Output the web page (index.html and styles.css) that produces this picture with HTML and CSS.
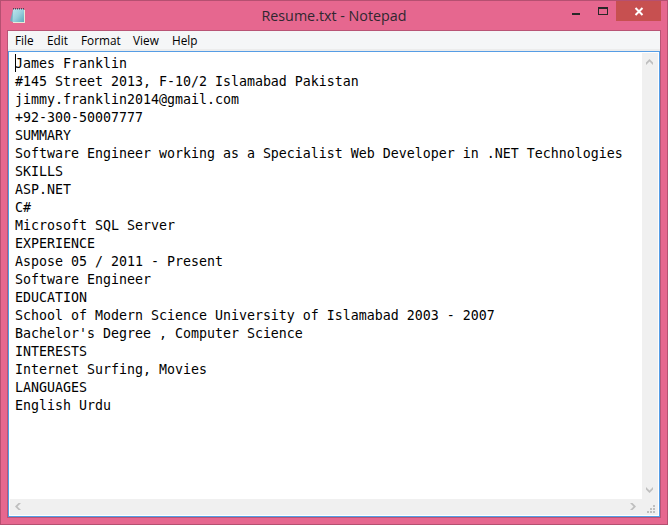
FILE: index.html
```html
<!DOCTYPE html>
<html lang="en">
<head>
<meta charset="utf-8">
<title>Resume.txt - Notepad</title>
<link rel="stylesheet" href="styles.css">
</head>
<body>
<div class="window">
  <header class="titlebar">
    <svg class="app-icon" viewBox="0 0 16 16" width="16" height="16">
      <defs><linearGradient id="paper" x1="0" y1="0" x2="1" y2="1"><stop offset="0" stop-color="#bfe6ee"/><stop offset=".5" stop-color="#9ad0dd"/><stop offset="1" stop-color="#5fa9bb"/></linearGradient></defs>
      <path d="M3 2L0 13L3 14Z" fill="#76a9bc"/>
      <path d="M4 2H15V15H3V14Z" fill="#e9ead8"/>
      <path d="M3 1H14V14H2.500Z" fill="url(#paper)"/>
      <path d="M3 .8H15" stroke="#454b59" stroke-width="1.500" stroke-dasharray="1 1"/>
    </svg>
    <h1 class="title">Resume.txt - Notepad</h1>
    <div class="controls">
      <svg class="control" viewBox="0 0 27 20" width="27" height="20"><path d="M10 12H18V14H10Z" fill="#282828"/></svg>
      <svg class="control" viewBox="0 0 27 20" width="27" height="20"><path fill-rule="evenodd" d="M9 6H19V14H9ZM10 8V13H18V8Z" fill="#282828"/></svg>
      <svg class="control close" viewBox="0 0 45 20" width="45" height="20"><path d="M19.500 7L26.500 14M26.500 7L19.500 14" stroke="#fff" stroke-width="2"/></svg>
    </div>
  </header>
  <main class="client">
    <nav class="menu"><span>File</span><span>Edit</span><span>Format</span><span>View</span><span>Help</span></nav>
    <div class="editor">
      <div class="text">
        <i class="caret"></i>
<pre class="document">James Franklin
#145 Street 2013, F-10/2 Islamabad Pakistan
jimmy.franklin2014@gmail.com
+92-300-50007777
SUMMARY
Software Engineer working as a Specialist Web Developer in .NET Technologies
SKILLS
ASP.NET
C#
Microsoft SQL Server
EXPERIENCE
Aspose 05 / 2011 - Present
Software Engineer
EDUCATION
School of Modern Science University of Islamabad 2003 - 2007
Bachelor's Degree , Computer Science
INTERESTS
Internet Surfing, Movies
LANGUAGES
English Urdu</pre>
      </div>
      <div class="scroll vertical">
        <svg viewBox="0 0 16 16" width="16" height="16"><path d="M7.500 6L11 9.500V12L7.500 8.500L4 12V9.500Z" class="arrow"/></svg>
        <svg viewBox="0 0 16 16" width="16" height="16"><path d="M7.500 10L11 6.500V4L7.500 7.500L4 4V6.500Z" class="arrow"/></svg>
      </div>
      <div class="scroll horizontal">
        <svg viewBox="0 0 16 16" width="16" height="16"><path d="M5 7.500L8.500 4H11L7.500 7.500L11 11H8.500Z" class="arrow"/></svg>
        <svg viewBox="0 0 16 16" width="16" height="16"><path d="M10 7.500L6.500 4H4L7.500 7.500L4 11H6.500Z" class="arrow"/></svg>
      </div>
      <svg class="grip" viewBox="0 0 16 16" width="16" height="16"><path d="M11 6h2v2h-2zM8 9h2v2h-2zM11 9h2v2h-2zM5 12h2v2h-2zM8 12h2v2h-2zM11 12h2v2h-2z" fill="#bfbfbf"/></svg>
    </div>
  </main>
</div>
</body>
</html>
```
FILE: styles.css
```css
* { box-sizing: border-box; }
body { margin: 0; }
svg { display: block; }

.window {
  width: 668px;
  height: 525px;
  padding: 0 6px 6px;
  border: 1px solid #b55071;
  background: #e6678f;
  display: flex;
  flex-direction: column;
}

.titlebar {
  height: 29px;
  display: grid;
  grid-template-columns: 99px 1fr 99px;
}
.app-icon { margin: 7px 0 0 3px; }
.title {
  margin: 0;
  text-align: center;
  font: 14.3px/29px "Open Sans", "Noto Sans", sans-serif;
  color: #302730;
  white-space: nowrap;
}
.controls { display: flex; }
.control { flex: none; }
.close { background: #c75050; }

.client {
  flex: 1;
  border: 1px solid #b95475;
  display: flex;
  flex-direction: column;
}
.menu {
  height: 20px;
  padding-left: 7px;
  background: #f5f6f7;
  border-bottom: 2px solid #ececec;
  display: grid;
  grid-template-columns: 32px 34px 52px 39px 1fr;
  font: 11.8px/18px "Open Sans", "Noto Sans", sans-serif;
  color: #000;
}

.editor {
  flex: 1;
  border: 1px solid #569de5;
  padding: 1px;
  background: #fff;
  display: grid;
  grid-template-columns: 1fr 16px;
  grid-template-rows: 1fr 16px;
}
.text {
  display: flex;
  padding: 1px 0 0 5px;
  overflow: hidden;
}
.caret {
  width: 1px;
  height: 18px;
  margin-right: -1px;
  background: #000;
}
.document {
  margin: 1px 0 0;
  font: 13.29px/18px "DejaVu Sans Mono", "Liberation Mono", monospace;
  color: #000;
}
.scroll {
  background: #f0f0f0;
  display: flex;
  justify-content: space-between;
}
.vertical { flex-direction: column; }
.arrow { fill: #bfbfbf; }
.grip { background: #f0f0f0; }
```
